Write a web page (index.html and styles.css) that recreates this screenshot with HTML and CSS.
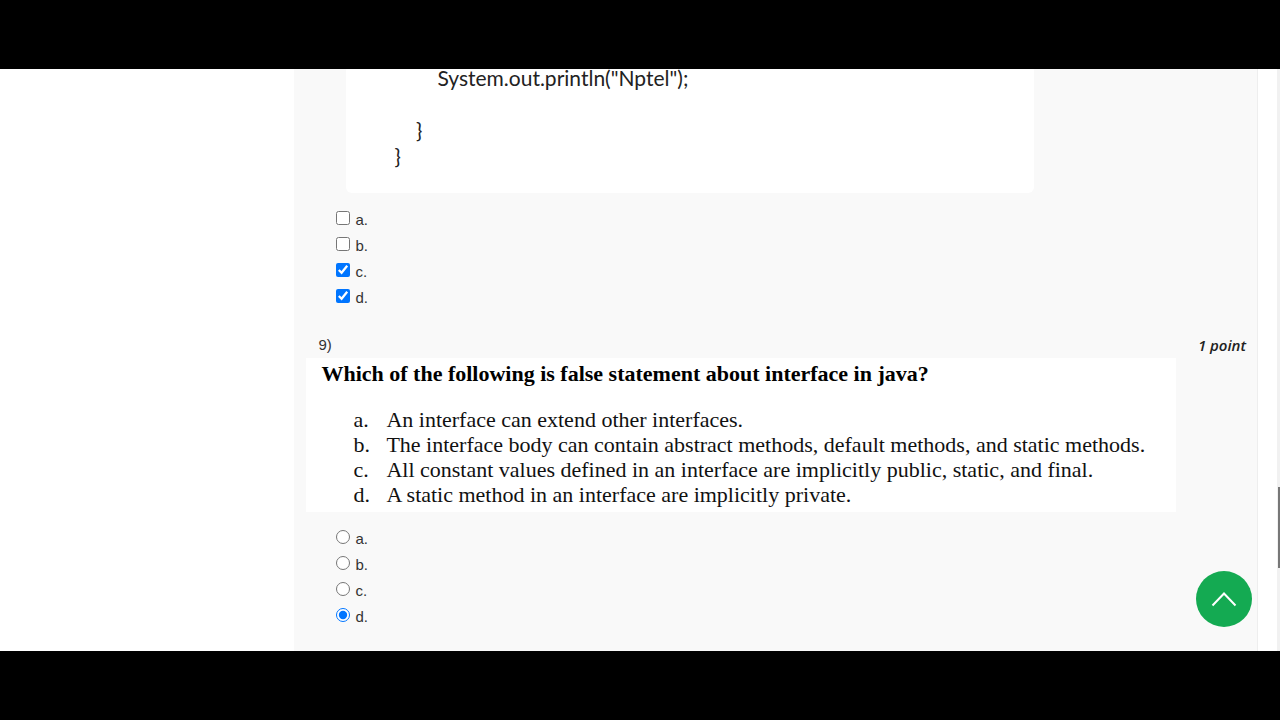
FILE: index.html
```html
<!DOCTYPE html>
<html lang="en">
<head>
    <meta charset="UTF-8">
    <meta name="viewport" content="width=device-width, initial-scale=1.0">
    <title>Assignment</title>
    <link rel="stylesheet" href="styles.css">
</head>
<body>
    <div class="page">
        <main class="assessment">
            <section class="question">
                <pre class="code">        System.out.println("Nptel");

    }
}</pre>
                <div class="options">
                    <label class="option"><input type="checkbox" name="q8" value="a"><span>a.</span></label>
                    <label class="option"><input type="checkbox" name="q8" value="b"><span>b.</span></label>
                    <label class="option"><input type="checkbox" name="q8" value="c" checked><span>c.</span></label>
                    <label class="option"><input type="checkbox" name="q8" value="d" checked><span>d.</span></label>
                </div>
            </section>

            <section class="question">
                <div class="question-header">
                    <span>9)</span>
                    <span class="points">1 point</span>
                </div>
                <div class="statement">
                    <h2 class="statement-title">Which of the following is false statement about interface in java?</h2>
                    <ol class="statement-list">
                        <li><span>a.</span>An interface can extend other interfaces.</li>
                        <li><span>b.</span>The interface body can contain abstract methods, default methods, and static methods.</li>
                        <li><span>c.</span>All constant values defined in an interface are implicitly public, static, and final.</li>
                        <li><span>d.</span>A static method in an interface are implicitly private.</li>
                    </ol>
                </div>
                <div class="options">
                    <label class="option"><input type="radio" name="q9" value="a"><span>a.</span></label>
                    <label class="option"><input type="radio" name="q9" value="b"><span>b.</span></label>
                    <label class="option"><input type="radio" name="q9" value="c"><span>c.</span></label>
                    <label class="option"><input type="radio" name="q9" value="d" checked><span>d.</span></label>
                </div>
            </section>
        </main>

        <div class="scrollbar"><div class="scrollbar-thumb"></div></div>

        <button class="to-top" type="button" aria-label="Back to top">
            <svg width="26" height="16" viewBox="0 0 26 16" fill="none" stroke="currentColor" stroke-width="2">
                <path d="M1.5 14.5 L13 2.5 L24.5 14.5"/>
            </svg>
        </button>
    </div>
</body>
</html>
```

FILE: styles.css
```css
* {
    margin: 0;
    padding: 0;
    box-sizing: border-box;
}

body {
    height: 100vh;
    padding: 69px 0;
    background: #000;
    color: #333;
    font-family: "Liberation Sans", Arial, sans-serif;
    font-size: 15px;
}

.page {
    position: relative;
    display: flex;
    height: 100%;
    overflow: hidden;
    background: #fff;
}

.assessment {
    flex: 1;
    margin-left: 23%;
    margin-right: 19px;
    padding: 0 11px 0 12px;
    background: #f9f9f9;
    border-right: 1px solid #eee;
}

/* scrolled part way through question 8 */
.code {
    max-width: 688px;
    margin: -4px 0 0 40px;
    padding: 0 48px 24px;
    border-radius: 6px;
    background: #fff;
    color: #222;
    font-family: Lato, sans-serif;
    font-size: 21px;
    line-height: 26px;
}

.options {
    display: flex;
    flex-direction: column;
    align-items: flex-start;
    padding: 14px 30px 13px;
}

.option {
    display: flex;
    gap: 5px;
    line-height: 26px;
}

.option input {
    width: 14px;
    height: 14px;
    margin-top: 4px;
}

.question-header {
    display: flex;
    align-items: flex-start;
    justify-content: space-between;
    padding: 9px 0 1px 12px;
    line-height: 24px;
}

.points {
    color: #222;
    font-family: "Open Sans", sans-serif;
    font-weight: 600;
    font-style: italic;
}

.statement {
    max-width: 870px;
    padding: 3px 15px 5px;
    background: #fff;
    color: #111;
    font-family: "Liberation Serif", "Times New Roman", serif;
    font-size: 22px;
    line-height: 25px;
}

.statement-title {
    margin-bottom: 21px;
    color: #000;
    font-size: 22px;
}

.statement-list {
    padding-left: 32px;
    list-style: none;
}

.statement-list li {
    display: flex;
}

.statement-list span {
    flex: 0 0 33px;
}

.scrollbar {
    display: flex;
    align-items: flex-end;
    width: 3px;
    padding-bottom: 83px;
    background: #f1f1f1;
}

.scrollbar-thumb {
    width: 2px;
    height: 81px;
    margin-left: auto;
    background: #777;
}

.to-top {
    position: absolute;
    right: 28px;
    bottom: 24px;
    display: flex;
    align-items: center;
    justify-content: center;
    width: 56px;
    height: 56px;
    border: none;
    border-radius: 50%;
    background: #14aa52;
    color: #fff;
    cursor: pointer;
}
```
